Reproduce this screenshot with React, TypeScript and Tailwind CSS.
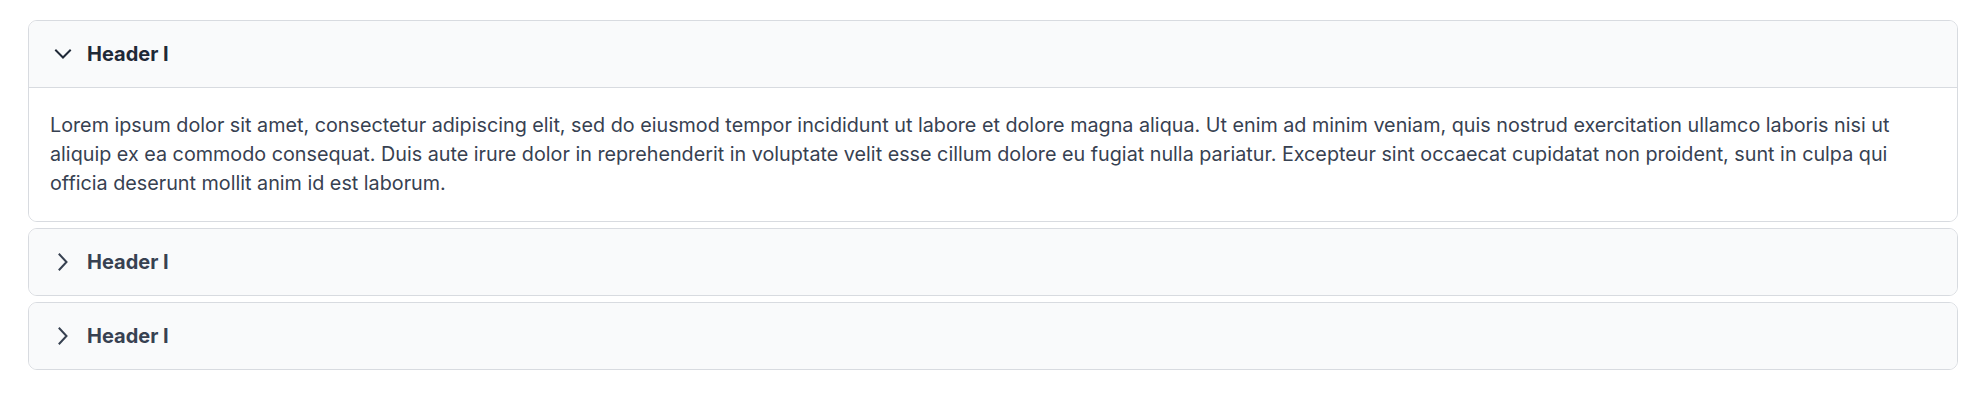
import React from "react";

const Chevron = ({ open }: { open: boolean }) => (
  <svg
    width="18"
    height="18"
    viewBox="0 0 18 18"
    fill="none"
    stroke="currentColor"
    strokeWidth="2"
    strokeLinecap="square"
    strokeLinejoin="miter"
    className="shrink-0"
  >
    {open ? <path d="M2 5.5 L9 12.5 L16 5.5" /> : <path d="M5.5 1.5 L12.5 9 L5.5 16.5" />}
  </svg>
);

const text =
  "Lorem ipsum dolor sit amet, consectetur adipiscing elit, sed do eiusmod tempor incididunt ut labore et dolore magna aliqua. Ut enim ad minim veniam, quis nostrud exercitation ullamco laboris nisi ut aliquip ex ea commodo consequat. Duis aute irure dolor in reprehenderit in voluptate velit esse cillum dolore eu fugiat nulla pariatur. Excepteur sint occaecat cupidatat non proident, sunt in culpa qui officia deserunt mollit anim id est laborum.";

const Item = ({ open }: { open: boolean }) => (
  <div className="border border-[#d8dbe0] rounded-[9px] overflow-hidden">
    <div
      className={
        "h-[66px] bg-[#f9fafb] flex items-center pl-[25px] gap-[15px] " +
        (open ? "text-[#1f2937]" : "text-[#374151]")
      }
    >
      <Chevron open={open} />
      <span className="text-[20px] font-bold leading-none">Header I</span>
    </div>
    {open && (
      <div className="border-t border-[#d8dbe0] bg-white px-[21px] pt-[23px] pb-[23px] text-[19.75px] leading-[29px] text-[#374151]">
        {text}
      </div>
    )}
  </div>
);

export default function App() {
  return (
    <div
      className="w-[1986px] h-[400px] bg-white px-[28px] pt-[20px] flex flex-col gap-[6px]"
      style={{ fontFamily: "Inter, 'Noto Sans', sans-serif" }}
    >
      <Item open={true} />
      <Item open={false} />
      <Item open={false} />
    </div>
  );
}
